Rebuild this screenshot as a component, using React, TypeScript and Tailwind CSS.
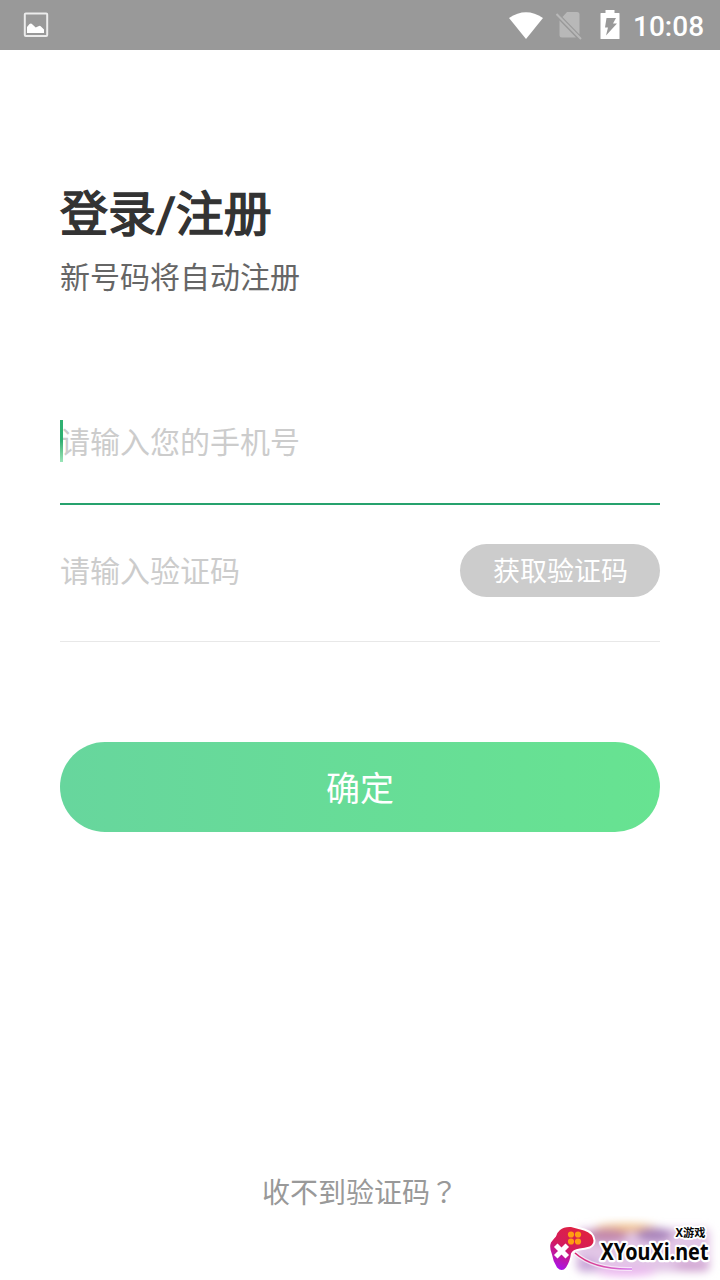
function StatusBar() {
  return (
    <header className="flex h-[50px] items-center bg-[#999999] text-white">
      <svg className="ml-[23px]" width="26" height="26" viewBox="0 0 26 26" fill="none">
        <rect x="1.8" y="1.600" width="22.4" height="22.4" rx="1" stroke="#ececec" strokeWidth="2" />
        <path d="M4 21v-6l2.500-3q1.500-1 3 .4l3.200 3 3.300-1.400q1-.4 1.700 .3l3.300 3.200v3.500z" fill="#fff" />
      </svg>
      <svg className="ml-auto" width="36" height="30" viewBox="0 0 36 30">
        <path d="M1 8Q18-3.500 35 8L18 29z" fill="#fff" />
      </svg>
      <svg className="ml-[11px]" width="28" height="30" viewBox="0 0 28 30">
        <path d="M12 2h10q2.500 0 2.500 2.500v20L7.500 7zM4.500 10.500L21 27.500H7q-2.500 0-2.500-2.500z" fill="#b8b8b8" />
        <path d="M1.500 4l24.500 25" stroke="#b8b8b8" strokeWidth="2" />
      </svg>
      <svg className="ml-[17px]" width="20" height="30" viewBox="0 0 20 30">
        <path d="M5.500 0h9v3H19q.5 0 .5.5V28.500q0 .5-.5.5H1q-.5 0-.5-.5V3.500Q.5 3 1 3h4.500z" fill="#fff" />
        <path d="M6.500 8h9.500l-3 5.500h4L6 25.500l2-8H5z" fill="#999" />
      </svg>
      <span className="ml-[13px] mr-4 w-[71px] whitespace-nowrap pt-[3px] font-['Roboto',sans-serif] text-[28px] font-medium leading-none">10:08</span>
    </header>
  );
}

function Watermark() {
  return (
    <div className="absolute bottom-0 right-0 h-[64px] w-[176px]">
      <svg width="176" height="64" viewBox="0 0 176 64">
        <defs>
          <linearGradient id="pad" x1="0.7" y1="0" x2="0.2" y2="1">
            <stop offset="0" stopColor="#e0223f" />
            <stop offset="0.5" stopColor="#d41c5c" />
            <stop offset="1" stopColor="#a812ee" />
          </linearGradient>
          <linearGradient id="cable" x1="0" y1="0" x2="1" y2="0">
            <stop offset="0" stopColor="#d9256f" />
            <stop offset="1" stopColor="#d67af0" />
          </linearGradient>
          <filter id="soft" x="-30%" y="-50%" width="160%" height="200%">
            <feGaussianBlur stdDeviation="4.500" />
          </filter>
        </defs>
        <g filter="url(#soft)">
          <rect x="32" y="12" width="134" height="44" rx="6" fill="#e2c6e6" />
          <ellipse cx="82" cy="12" rx="31" ry="4" fill="#eebc83" />
          <ellipse cx="110" cy="19" rx="18" ry="7" fill="#a883bb" />
          <ellipse cx="62" cy="20" rx="22" ry="7" fill="#c287ad" />
          <ellipse cx="44" cy="49" rx="11" ry="7" fill="#c9a8d9" />
          <ellipse cx="148" cy="50" rx="18" ry="5" fill="#d0a3d0" />
          <ellipse cx="82" cy="56" rx="30" ry="4" fill="#ecb3f0" />
        </g>
        <path d="M31 37q19 17 57 16" stroke="#fff" strokeWidth="4" fill="none" opacity=".6" />
        <path d="M31 37q19 17 57 16" stroke="url(#cable)" strokeWidth="1.600" fill="none" />
        <path
          d="M16 14q4-3.500 11-3l13 3.500q9 3 9.500 10 0 4-4 6-5 1.500-10 2-7 1-8.500 5-1 8-5 14-4 5-9 0-4-6-5-13-3-7-1-12 3-4 5-6 1-4 4-6.500z"
          fill="url(#pad)" stroke="#fff" strokeWidth="4" paintOrder="stroke" strokeLinejoin="round"
        />
        <path d="M13.500 31l8 8M21.500 31l-8 8" stroke="#fff" strokeWidth="5" strokeLinecap="square" />
        <g fill="#ff9d12">
          <circle cx="27" cy="18.500" r="3.100" />
          <circle cx="34" cy="18.500" r="3.100" />
          <circle cx="27" cy="25.500" r="3.100" />
          <circle cx="34" cy="25.500" r="3.100" />
        </g>
        <g fill="#050505" stroke="#fff" strokeLinejoin="round" paintOrder="stroke">
          <text x="56.500" y="44" textLength="108" lengthAdjust="spacingAndGlyphs" strokeWidth="4.500" className="font-['Noto_Sans',sans-serif] text-[24px] font-bold">XYouXi.net</text>
          <text x="131.500" y="20.500" textLength="30" lengthAdjust="spacingAndGlyphs" strokeWidth="3.500" className="font-['Noto_Sans','Noto_Sans_CJK_SC',sans-serif] text-[11.5px] font-bold">X游戏</text>
        </g>
      </svg>
    </div>
  );
}

export default function App() {
  return (
    <div className="relative flex h-[1280px] w-[720px] flex-col overflow-hidden bg-white font-['Roboto','Noto_Sans_CJK_SC',sans-serif]">
      <StatusBar />
      <main className="flex flex-1 flex-col px-[60px] pt-[135px]">
        <h1 className="text-[48px] font-normal leading-[60px] text-[#333333] [-webkit-text-stroke:1.5px_#333333]">登录/注册</h1>
        <p className="mt-[15px] text-[30px] leading-[36px] text-[#666666]">新号码将自动注册</p>

        <div className="mt-[124px] flex h-[85px] items-start border-b-2 border-[#26a26d]">
          <div className="relative flex h-[42px] items-center">
            <span className="absolute left-0 top-0 h-[42px] w-[3px] bg-gradient-to-b from-[#2fb072] from-50% to-[#9be5b9]" />
            <span className="pt-1 text-[30px] leading-[42px] text-[#cccccc]">请输入您的手机号</span>
          </div>
        </div>

        <div className="flex h-[137px] items-start justify-between border-b border-[#e8e8e8] pt-[39px]">
          <span className="pt-px text-[30px] leading-[53px] text-[#cccccc]">请输入验证码</span>
          <button className="h-[53px] w-[200px] rounded-full bg-[#cccccc] pl-px pt-[4px] text-[27px] leading-[49px] text-white">获取验证码</button>
        </div>

        <button className="mt-[100px] h-[90px] w-full rounded-full bg-gradient-to-r from-[#67d69d] to-[#67e391] pt-1 text-[34px] leading-[86px] text-white">
          确定
        </button>

        <p className="mb-[68px] mt-auto text-center text-[28px] leading-[36px] text-[#999999]">
          收不到验证码<span className="font-['Noto_Sans_CJK_TC',sans-serif]" lang="zh-TW">？</span>
        </p>
      </main>
      <Watermark />
    </div>
  );
}
